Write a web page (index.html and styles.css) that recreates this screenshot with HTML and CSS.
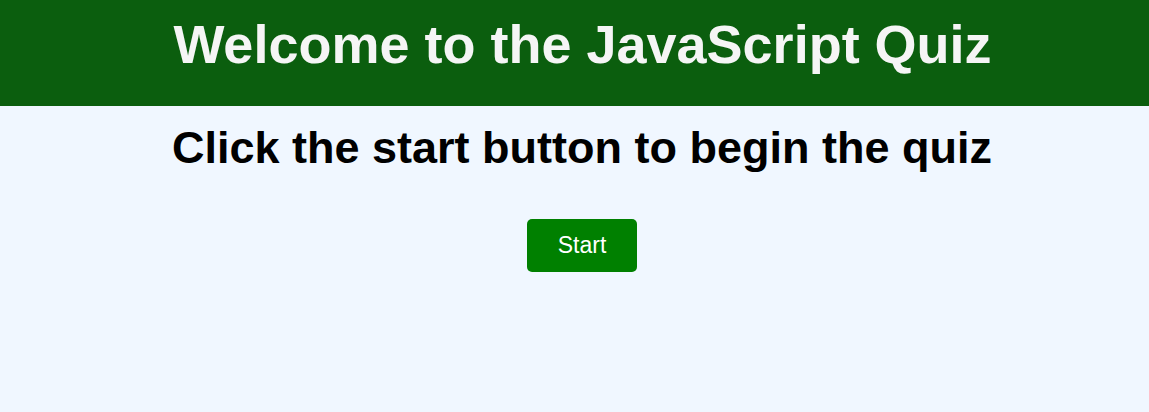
FILE: index.html
```html
<!DOCTYPE html>
<html>
<head>
<meta charset="utf-8">
<link rel="stylesheet" href="styles.css">
</head>
<body>
<header class="top">
  <h1 class="title">Welcome to the JavaScript Quiz</h1>
</header>
<main class="intro">
  <h2 class="subtitle">Click the start button to begin the quiz</h2>
  <button class="start">Start</button>
</main>
</body>
</html>
```
FILE: styles.css
```css
html, body {
  margin: 0;
  padding: 0;
  background: #f0f7ff;
  font-family: "Liberation Sans", Arial, sans-serif;
}
.top {
  box-sizing: border-box;
  background: #0b5e0e;
  height: 106px;
  padding: 17px 0 0 16px;
  text-align: center;
}
.title {
  margin: 0;
  color: #f5f5f5;
  font-size: 54px;
  font-weight: bold;
  line-height: 1;
}
.intro {
  display: flex;
  flex-direction: column;
  align-items: center;
  padding-left: 15px;
}
.subtitle {
  margin: 19px 0 0;
  font-size: 45px;
  line-height: 1;
  color: #000;
}
.start {
  margin-top: 49px;
  width: 110px;
  height: 53px;
  padding: 0;
  background: #008000;
  color: #fff;
  border: none;
  border-radius: 5px;
  font-family: "Liberation Sans", Arial, sans-serif;
  font-size: 23px;
}
```
